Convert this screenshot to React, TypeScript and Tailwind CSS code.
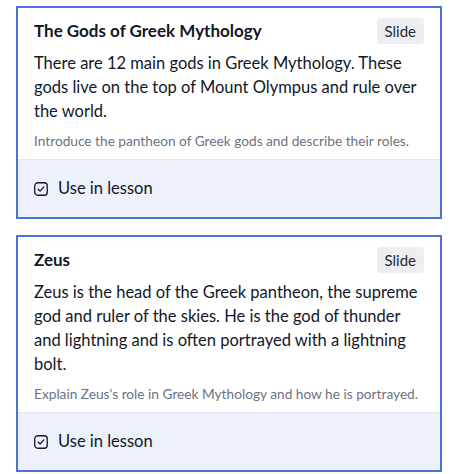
import React from 'react';

interface CardProps {
  title: string;
  body: string;
  hint: string;
}

const cards: CardProps[] = [
  {
    title: 'The Gods of Greek Mythology',
    body: 'There are 12 main gods in Greek Mythology. These gods live on the top of Mount Olympus and rule over the world.',
    hint: 'Introduce the pantheon of Greek gods and describe their roles.',
  },
  {
    title: 'Zeus',
    body: 'Zeus is the head of the Greek pantheon, the supreme god and ruler of the skies. He is the god of thunder and lightning and is often portrayed with a lightning bolt.',
    hint: "Explain Zeus's role in Greek Mythology and how he is portrayed.",
  },
];

const CheckIcon = () => (
  <svg width="14" height="14" viewBox="0 0 14 14" fill="none" className="shrink-0">
    <rect x="0.75" y="0.75" width="12.5" height="12.5" rx="3" stroke="#111827" strokeWidth="1.3" />
    <path d="M4.2 7.2 L6.1 9.1 L9.8 4.9" stroke="#111827" strokeWidth="1.3" strokeLinecap="round" strokeLinejoin="round" />
  </svg>
);

const LessonCard: React.FC<CardProps> = ({ title, body, hint }) => (
  <div className="border-2 border-[#4d72d8] bg-white">
    <div className="px-4 pt-[10px] pb-2">
      {/* header */}
      <div className="flex items-center justify-between">
        <h2 className="text-[17px] font-bold text-[#111827] leading-6">{title}</h2>
        <span className="rounded-sm bg-[#eceef2] px-2 text-[15px] leading-[26px] text-[#1f2937]">Slide</span>
      </div>
      <p className="mt-[7px] text-[16.5px] leading-6 text-[#111827]">{body}</p>
      <p className="mt-2 text-[13.7px] leading-5 text-[#6b7280]">{hint}</p>
    </div>
    <div className="flex h-[58px] items-center gap-[10px] border-t border-[#e3e7ee] bg-[#edf1fc] px-4">
      <CheckIcon />
      <span className="text-[16.5px] text-[#111827]">Use in lesson</span>
    </div>
  </div>
);

export default function App() {
  return (
    <div className="flex w-[458px] flex-col gap-4 px-4 pt-[6px] font-['Lato',sans-serif]">
      {cards.map((c) => (
        <LessonCard key={c.title} {...c} />
      ))}
    </div>
  );
}
